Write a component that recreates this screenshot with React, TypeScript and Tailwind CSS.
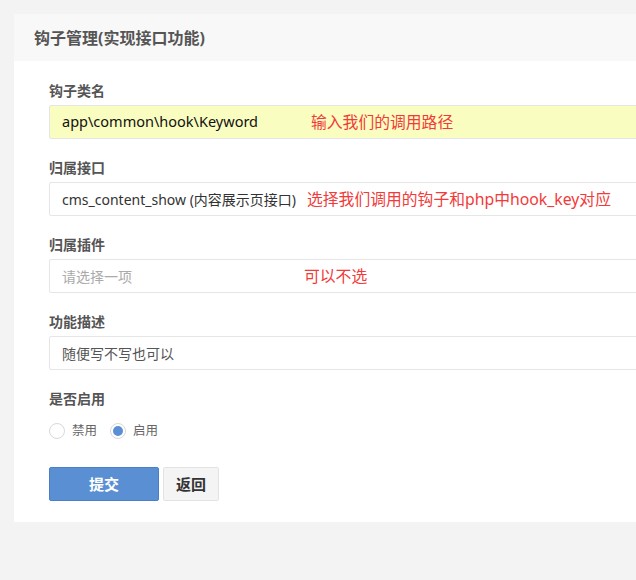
import React from "react";

const font = { fontFamily: '"Noto Sans", "Noto Sans CJK SC", sans-serif' };

function Label({ children }: { children: React.ReactNode }) {
  return (
    <div className="h-[20px] mb-[4px] text-[14px] leading-[20px] font-bold text-[#555]">
      {children}
    </div>
  );
}

function Note({ left, children }: { left: number; children: React.ReactNode }) {
  return (
    <span
      className="absolute top-1/2 -translate-y-1/2 text-[15.8px] leading-[20px] text-[#f23a3a] whitespace-nowrap"
      style={{ left }}
    >
      {children}
    </span>
  );
}

export default function App() {
  return (
    <div
      className="w-[636px] h-[580px] overflow-hidden bg-[#f3f3f3] pt-[14px] pl-[14px]"
      style={font}
    >
      <div className="w-[800px] bg-white">
        <div className="h-[47px] bg-[#f8f8f8] pl-[20px] flex items-center text-[16px] font-bold text-[#555]">
          钩子管理(实现接口功能)
        </div>
        <div className="pl-[35px] pt-[20px] pb-[21px] flex flex-col">
          <div className="mb-[19px]">
            <Label>钩子类名</Label>
            <div className="relative w-[700px] h-[34px] border border-[#e6e6e6] rounded-[2px] bg-[#fafdc0] pl-[12px] flex items-center text-[14.5px] text-[#111]">
              app\common\hook\Keyword
              <Note left={261}>输入我们的调用路径</Note>
            </div>
          </div>
          <div className="mb-[19px]">
            <Label>归属接口</Label>
            <div className="relative w-[700px] h-[34px] border border-[#e6e6e6] rounded-[2px] bg-white pl-[12px] flex items-center text-[14px] text-[#333]">
              cms_content_show (内容展示页接口)
              <Note left={257}>选择我们调用的钩子和php中hook_key对应</Note>
            </div>
          </div>
          <div className="mb-[19px]">
            <Label>归属插件</Label>
            <div className="relative w-[700px] h-[34px] border border-[#e6e6e6] rounded-[2px] bg-white pl-[12px] flex items-center text-[14px] text-[#aaa]">
              请选择一项
              <Note left={254}>可以不选</Note>
            </div>
          </div>
          <div className="mb-[19px]">
            <Label>功能描述</Label>
            <div className="w-[700px] h-[34px] border border-[#e6e6e6] rounded-[2px] bg-white pl-[12px] flex items-center text-[14px] text-[#555]">
              随便写不写也可以
            </div>
          </div>
          <div>
            <Label>是否启用</Label>
            <div className="flex items-center h-[30px] mt-[7px] text-[12.5px] text-[#666]">
              <span className="w-[16px] h-[16px] rounded-full border border-[#d9d9d9] bg-white" />
              <span className="ml-[7px]">禁用</span>
              <span className="ml-[13px] w-[16px] h-[16px] rounded-full border border-[#d9d9d9] bg-white flex items-center justify-center">
                <span className="w-[10px] h-[10px] rounded-full bg-[#5b8fd4]" />
              </span>
              <span className="ml-[7px]">启用</span>
            </div>
          </div>
          <div className="flex mt-[21px] gap-[4px]">
            <button className="w-[110px] h-[34px] bg-[#5b8fd4] border border-[#4a7fc7] rounded-[2px] text-white text-[15px] font-bold">
              提交
            </button>
            <button className="w-[56px] h-[34px] bg-[#f4f4f4] border border-[#e3e3e3] rounded-[2px] text-[#333] text-[15px] font-bold">
              返回
            </button>
          </div>
        </div>
      </div>
    </div>
  );
}
